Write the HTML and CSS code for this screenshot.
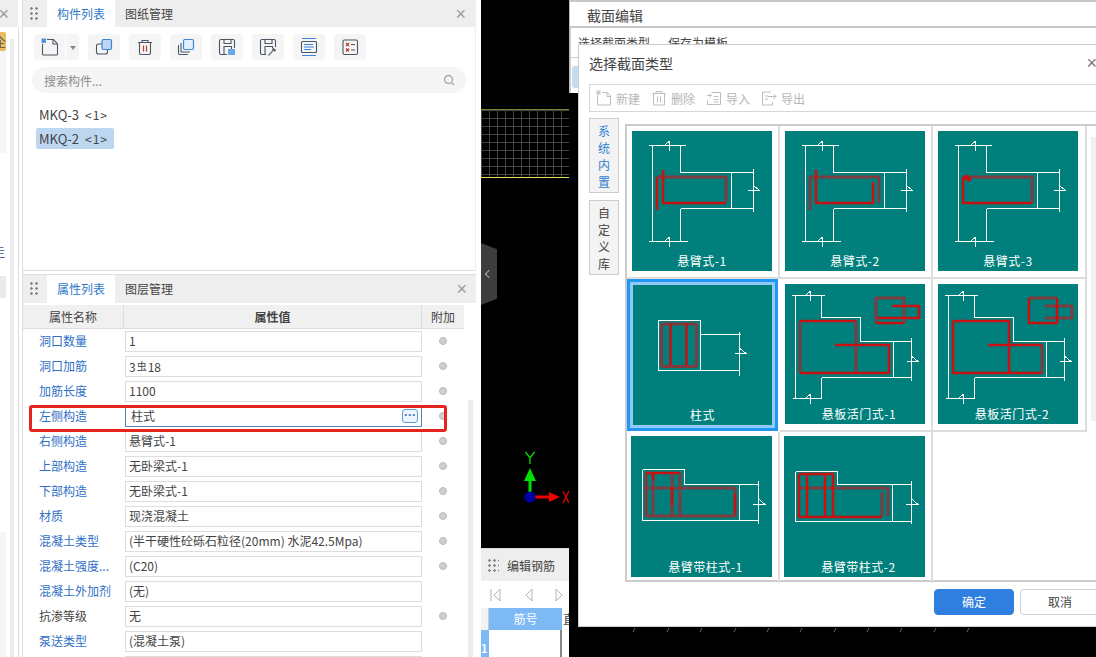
FILE: index.html
```html
<!DOCTYPE html>
<html lang="zh-CN">
<head>
    <meta charset="UTF-8">
    <title>截面编辑</title>
    <link rel="stylesheet" href="styles.css">
</head>
<body>
<div class="app">

    <div class="side-strip">
        <div class="strip-head"><span class="close-x">×</span></div>
        <div class="strip-body">
            <div class="strip-pane">
                <span class="strip-badge">企</span>
                <span class="strip-light"></span>
                <span class="strip-mark">走.</span>
                <span class="strip-box"></span>
                <span class="strip-lower"></span>
            </div>
            <div class="strip-scroll"></div>
        </div>
    </div>

    <div class="panels">
        <section class="panel panel-list">
            <div class="panel-head">
                <span class="grip"></span>
                <span class="tab active">构件列表</span>
                <span class="tab">图纸管理</span>
                <span class="close-x">×</span>
            </div>
            <div class="toolbar">
                <div class="tool-split">
                    <span class="tool-main">
                        <svg viewBox="0 0 20 20" class="icon"><path class="ic-dark" d="M2.500 7V17a1 1 0 0 0 1 1h13a1 1 0 0 0 1-1V7l-4-4.500H7"/><path class="ic-dark" d="M13 3v4h4"/><rect x="1.500" y="1.500" width="4.500" height="4.500" class="ic-check"/></svg>
                    </span>
                    <span class="tool-drop"></span>
                </div>
                <span class="tool">
                    <svg viewBox="0 0 20 20" class="icon"><rect x="2.500" y="7" width="11" height="10" rx="2" class="ic-dark"/><rect x="8" y="2.500" width="9.500" height="10" rx="1.500" class="ic-blue"/></svg>
                </span>
                <span class="tool">
                    <svg viewBox="0 0 20 20" class="icon"><path class="ic-dark" d="M3 5.500h14M7 5.500V3.500h6v2M4.500 5.500V16a1.500 1.500 0 0 0 1.500 1.500h8a1.500 1.500 0 0 0 1.500-1.500V5.500"/><path class="ic-red" d="M8.500 8.500v6M11.500 8.500v6"/></svg>
                </span>
                <span class="tool">
                    <svg viewBox="0 0 20 20" class="icon"><path class="ic-dark" d="M2.500 8v8a1.500 1.500 0 0 0 1.500 1.500h8M5 6v8.500a.500.500 0 0 0 .500.500H14"/><rect x="7.500" y="2.500" width="10" height="10" rx="1.500" class="ic-blue-light"/></svg>
                </span>
                <span class="tool">
                    <svg viewBox="0 0 20 20" class="icon"><path class="ic-dark" d="M10 17.500H4a1.500 1.500 0 0 1-1.500-1.500V4A1.500 1.500 0 0 1 4 2.500h12A1.500 1.500 0 0 1 17.500 4v7M7 17V9.500h7.500V12M7 3v3.500h7V3"/><rect x="11" y="12" width="7" height="6" class="ic-fill-blue"/></svg>
                </span>
                <span class="tool">
                    <svg viewBox="0 0 20 20" class="icon"><path class="ic-dark" d="M8 17.500H4a1.500 1.500 0 0 1-1.500-1.500V4A1.500 1.500 0 0 1 4 2.500h12A1.500 1.500 0 0 1 17.500 4v6M7 17V9.500h7.500V11M7 3v3.500h7V3"/><path class="ic-pen" d="M10.500 18.500l5-5.500"/><path class="ic-pen-tip" d="M14.500 11.500l3 2.500"/></svg>
                </span>
                <span class="tool">
                    <svg viewBox="0 0 20 20" class="icon"><rect x="2.500" y="4.500" width="15" height="11" rx="1" class="ic-dark"/><path class="ic-line-blue" d="M3 1.500h14M3 18.500h14M5 7.500h9M5 10h10M5 12.500h7"/></svg>
                </span>
                <span class="tool">
                    <svg viewBox="0 0 20 20" class="icon"><rect x="3" y="3" width="14.500" height="14.500" rx="1.500" class="ic-dark"/><path class="ic-red" d="M6 6l3 3M9 6l-3 3M6 11.500l3 3M9 11.500l-3 3"/><path class="ic-dark" d="M11 7.500h4M11 13h4"/></svg>
                </span>
            </div>
            <div class="search">
                <span>搜索构件...</span>
                <svg viewBox="0 0 12 12" class="search-icon"><circle cx="5.500" cy="5.500" r="4"/><path d="M8.500 8.500l2.500 2.500"/></svg>
            </div>
            <ul class="comp-list">
                <li class="comp-item">MKQ-3<span class="comp-count">&lt;1&gt;</span></li>
                <li class="comp-item selected">MKQ-2<span class="comp-count">&lt;1&gt;</span></li>
            </ul>
        </section>

        <section class="panel panel-props">
            <div class="panel-head">
                <span class="grip"></span>
                <span class="tab active">属性列表</span>
                <span class="tab">图层管理</span>
                <span class="close-x">×</span>
            </div>
            <div class="prop-table">
                <div class="prop-header">
                    <span class="col-name">属性名称</span>
                    <span class="col-value">属性值</span>
                    <span class="col-extra">附加</span>
                </div>
                <div class="prop-row"><span class="prop-name">洞口数量</span><span class="prop-value">1</span><span class="radio"></span></div>
                <div class="prop-row"><span class="prop-name">洞口加筋</span><span class="prop-value">3<span class="rebar">虫</span>18</span><span class="radio"></span></div>
                <div class="prop-row"><span class="prop-name">加筋长度</span><span class="prop-value">1100</span><span class="radio"></span></div>
                <div class="prop-row"><span class="prop-name">左侧构造</span><span class="prop-value editing">柱式<span class="more-btn">···</span></span><span class="radio"></span></div>
                <div class="prop-row"><span class="prop-name">右侧构造</span><span class="prop-value">悬臂式-1</span><span class="radio"></span></div>
                <div class="prop-row"><span class="prop-name">上部构造</span><span class="prop-value">无卧梁式-1</span><span class="radio"></span></div>
                <div class="prop-row"><span class="prop-name">下部构造</span><span class="prop-value">无卧梁式-1</span><span class="radio"></span></div>
                <div class="prop-row"><span class="prop-name">材质</span><span class="prop-value">现浇混凝土</span><span class="radio"></span></div>
                <div class="prop-row"><span class="prop-name">混凝土类型</span><span class="prop-value">(半干硬性砼砾石粒径(20mm) 水泥42.5Mpa)</span><span class="radio"></span></div>
                <div class="prop-row"><span class="prop-name">混凝土强度...</span><span class="prop-value">(C20)</span><span class="radio"></span></div>
                <div class="prop-row"><span class="prop-name">混凝土外加剂</span><span class="prop-value">(无)</span></div>
                <div class="prop-row"><span class="prop-name plain">抗渗等级</span><span class="prop-value">无</span><span class="radio"></span></div>
                <div class="prop-row"><span class="prop-name">泵送类型</span><span class="prop-value">(混凝土泵)</span></div>
                <div class="prop-row"><span class="prop-name"></span><span class="prop-value"></span></div>
            </div>
            <div class="prop-scroll"></div>
            <div class="highlight-box"></div>
        </section>
    </div>

    <div class="cad-view">
        <div class="cad-grid"></div>
        <div class="cad-handle"><span class="handle-arrow"></span></div>
        <svg class="cad-axis" viewBox="0 0 50 60">
            <path class="axis-y" d="M11 30V44"/>
            <path class="axis-y-head" d="M11 18l-6 13h12z"/>
            <path class="axis-y-label" d="M6.500 2l4.500 6 4.500-6M11 8V14"/>
            <path class="axis-x" d="M14 47h18"/>
            <path class="axis-x-head" d="M41 47l-11-5v10z"/>
            <path class="axis-x-label" d="M44 41l6 12M50 41l-6 12"/>
            <circle cx="11" cy="47" r="5.500" class="axis-origin"/>
        </svg>
        <svg class="cad-ticks" viewBox="0 0 350 6">
            <path d="M3 5l2-4M37 5l2-4M70 5l2-4M104 5l2-4M137 5l2-4M170 5l2-4M204 5l2-4M237 5l2-4M270 5l2-4M304 5l2-4M337 5l2-4"/>
        </svg>
        <div class="rebar-panel">
            <div class="rebar-head">
                <span class="grip"></span>
                <span class="rebar-title">编辑钢筋</span>
            </div>
            <div class="rebar-tools">
                <svg viewBox="0 0 80 14" class="rebar-nav"><path d="M1 1v12M10 1l-6 6 6 6zM42 1l-6 6 6 6zM66 1l6 6-6 6z"/></svg>
            </div>
            <div class="rebar-grid">
                <span class="rebar-corner"></span>
                <span class="rebar-col">筋号</span>
                <span class="rebar-col-next">直</span>
            </div>
            <div class="rebar-rows">
                <span class="rebar-index">1</span>
                <span class="rebar-cell"></span>
            </div>
        </div>
    </div>

    <!-- 后面的窗口 -->
    <div class="window window-back">
        <div class="back-title">截面编辑</div>
        <div class="back-menu"><span>选择截面类型</span><span>保存为模板</span></div>
        <div class="back-tabs"><span class="back-tab"></span></div>
    </div>

    <!-- 选择截面类型 -->
    <div class="window type-dialog">
        <div class="dialog-title">选择截面类型<span class="close-x dialog-close">×</span></div>
        <div class="dialog-tools">
            <span class="dialog-tool">
                <svg viewBox="0 0 16 16" class="tool-icon"><path d="M1.500 5V15h13V6l-3-3.500H6M11 3v3.500h3.500"/><rect x=".5" y=".5" width="4" height="4" class="tool-icon-dots"/></svg>新建
            </span>
            <span class="dialog-tool">
                <svg viewBox="0 0 16 16" class="tool-icon"><path d="M1.500 3.500h13M5 3.500V1.500h6v2M2.500 3.500V15h11V3.500M6.500 6.500v6M9.500 6.500v6"/></svg>删除
            </span>
            <span class="dialog-tool">
                <svg viewBox="0 0 16 16" class="tool-icon"><path d="M5.500 2.500H14.500V14.500H1.500V10M8 6.500h4.500M8 9.500h4.500M8 12h4.500M1 5.500h4M3.500 3.500l2 2-2 2"/></svg>导入
            </span>
            <span class="dialog-tool">
                <svg viewBox="0 0 16 16" class="tool-icon"><path d="M10 2H1.500v13h10v-3M4 6h3M4 9h3M7 6.500h8M12.500 4l2.500 2.500-2.500 2.500"/></svg>导出
            </span>
        </div>
        <div class="dialog-body">
            <div class="side-tabs">
                <span class="side-tab active">系统内置</span>
                <span class="side-tab">自定义库</span>
            </div>
            <div class="type-grid">

                <div class="type-cell">
                    <div class="tile">
                        <svg viewBox="0 0 140 140" class="tile-art">
                            <path class="wall" d="M16.500 14.500h37M20.500 14.500v96M48.500 14.500v27h73M99.500 41.500v36M121.500 38v43M48.500 77.500h73M48.500 77.500v33M16.500 110.500h39"/>
                            <path class="mark" d="M37.500 10v9.500M37.500 10l-5 4.500M37.500 106v9.500M37.500 106l-5 4.500M116 59.500h11.500l-6-5"/>
                            <path class="bar-dim" d="M25 46H94V71"/>
                            <path class="bar" d="M25 79V46M94 72H31V39"/>
                        </svg>
                        <span class="tile-label">悬臂式-1</span>
                    </div>
                </div>

                <div class="type-cell">
                    <div class="tile">
                        <svg viewBox="0 0 140 140" class="tile-art">
                            <path class="wall" d="M16.500 14.500h37M20.500 14.500v96M48.500 14.500v27h73M99.500 41.500v36M121.500 38v43M48.500 77.500h73M48.500 77.500v33M16.500 110.500h39"/>
                            <path class="mark" d="M37.500 10v9.500M37.500 10l-5 4.500M37.500 106v9.500M37.500 106l-5 4.500M116 59.500h11.500l-6-5"/>
                            <path class="bar-dim" d="M25 79V46H94V72"/>
                            <path class="bar" d="M31 39V72H88V51"/>
                        </svg>
                        <span class="tile-label">悬臂式-2</span>
                    </div>
                </div>

                <div class="type-cell">
                    <div class="tile">
                        <svg viewBox="0 0 140 140" class="tile-art">
                            <path class="wall" d="M16.500 14.500h37M20.500 14.500v96M48.500 14.500v27h73M99.500 41.500v36M121.500 38v43M48.500 77.500h73M48.500 77.500v33M16.500 110.500h39"/>
                            <path class="mark" d="M37.500 10v9.500M37.500 10l-5 4.500M37.500 106v9.500M37.500 106l-5 4.500M116 59.500h11.500l-6-5"/>
                            <path class="bar-dim" d="M25 46H94V72"/>
                            <path class="bar" d="M25 46V72H94M25 46l7 4M27 44l6 5"/>
                        </svg>
                        <span class="tile-label">悬臂式-3</span>
                    </div>
                </div>

                <div class="type-cell selected">
                    <div class="tile">
                        <svg viewBox="0 0 140 140" class="tile-art">
                            <path class="wall" d="M26.500 36.500h42v50h-42zM68.500 50.500h40M68.500 86.500h39M107.500 47.500v44"/>
                            <path class="mark" d="M102.500 69.500h11.500l-6-5"/>
                            <rect x="29.500" y="40" width="35" height="42.500" rx="2" class="bar-dim"/>
                            <path class="bar" d="M38.500 40V82M54.500 40V82"/>
                        </svg>
                        <span class="tile-label">柱式</span>
                    </div>
                </div>

                <div class="type-cell">
                    <div class="tile">
                        <svg viewBox="0 0 140 140" class="tile-art">
                            <path class="wall" d="M6.500 11.500h33M10.500 11.500v103M36.500 11.500v22h39v24h51M108.500 57.500v36M126.500 54v43M36.500 93.500h90M36.500 93.500v21M7.500 114.500h29"/>
                            <path class="mark" d="M25.500 7v9.500M25.500 7l-5 4.500M25.500 110v9.500M25.500 110l-5 4.500M121.500 77.500h11.500l-6-5"/>
                            <path class="bar-dim" d="M71 37V89M15 89V37M91 34V14H119V39M91 39V34"/>
                            <path class="bar" d="M15 37H71M50 61H104V89H15M91 39H119M107 22H134V34H92"/>
                        </svg>
                        <span class="tile-label wide">悬板活门式-1</span>
                    </div>
                </div>

                <div class="type-cell">
                    <div class="tile">
                        <svg viewBox="0 0 140 140" class="tile-art">
                            <path class="wall" d="M6.500 11.500h33M10.500 11.500v103M36.500 11.500v22h39v24h51M108.500 57.500v36M126.500 54v43M36.500 93.500h90M36.500 93.500v21M7.500 114.500h29"/>
                            <path class="mark" d="M25.500 7v9.500M25.500 7l-5 4.500M25.500 110v9.500M25.500 110l-5 4.500M121.500 77.500h11.500l-6-5"/>
                            <path class="bar-dim" d="M104 61V89M107 22H134V34H107M91 14H119"/>
                            <path class="bar" d="M15 37H71V89M15 37V89H104M50 61H104M91 14V39H119V14"/>
                        </svg>
                        <span class="tile-label wide">悬板活门式-2</span>
                    </div>
                </div>

                <div class="type-cell">
                    <div class="tile">
                        <svg viewBox="0 0 141 141" class="tile-art">
                            <path class="wall" d="M11.500 33.500h42v15h74M11.500 33.500v51h116M108.500 48.500v36M127.500 45v43"/>
                            <path class="mark" d="M122 68h11.500l-6-5"/>
                            <path class="bar-dim" d="M15 80V37M49 37V80M15 52H104V80H15M22 37V80M41 37V80"/>
                            <path class="bar" d="M15 37H49M22 37V44M41 52V70M104 58V78"/>
                        </svg>
                        <span class="tile-label wide">悬臂带柱式-1</span>
                    </div>
                </div>

                <div class="type-cell">
                    <div class="tile">
                        <svg viewBox="0 0 141 141" class="tile-art">
                            <path class="wall" d="M11.500 35.500h42v13h74M11.500 35.500v50h116M108.500 48.500v37M127.500 45v43"/>
                            <path class="mark" d="M122 68h11.500l-6-5"/>
                            <path class="bar-dim" d="M49 52H104V80M98 80V56M15 52H49"/>
                            <path class="bar" d="M15 38H49V81M15 38V81H98M23 38V81M41 38V81"/>
                        </svg>
                        <span class="tile-label wide">悬臂带柱式-2</span>
                    </div>
                </div>

                <div class="type-cell empty"></div>
            </div>
            <div class="grid-scroll"></div>
        </div>
        <div class="dialog-foot">
            <span class="btn primary">确定</span>
            <span class="btn">取消</span>
        </div>
    </div>
</div>
</body>
</html>
```

FILE: styles.css
```css
* {
    box-sizing: border-box;
}
html, body {
    margin: 0;
    padding: 0;
    background: #fff;
    overflow: hidden;
}
body {
    font-family: "Noto Sans CJK SC", "Open Sans", sans-serif;
    font-size: 12px;
    color: #444;
}
.app {
    position: relative;
    display: flex;
    width: 1096px;
    height: 657px;
    overflow: hidden;
}
.close-x {
    margin-left: auto;
    color: #9a9a9a;
    font-size: 18px;
    line-height: 1;
    font-family: "Liberation Sans", sans-serif;
}

/* left strip */
.side-strip {
    width: 23px;
    flex-shrink: 0;
    border-right: 1px solid #ddd;
    display: flex;
    flex-direction: column;
}
.strip-head {
    height: 27px;
    width: 18px;
    background: #eeeeef;
    display: flex;
    align-items: center;
    justify-content: flex-end;
    padding-right: 9px;
    overflow: hidden;
}
.strip-head .close-x {
    flex-shrink: 0;
}
.strip-body {
    flex: 1;
    display: flex;
    width: 19px;
    border-right: 1px solid #ddd;
}
.strip-pane {
    width: 6px;
    flex-shrink: 0;
    display: flex;
    flex-direction: column;
    padding-top: 5px;
    overflow: hidden;
    color: #555;
}
.strip-badge {
    display: block;
    height: 19px;
    flex-shrink: 0;
    background: #ecb95f;
    border-radius: 0 2px 2px 0;
    color: #555;
    line-height: 19px;
    text-indent: -6px;
    overflow: hidden;
}
.strip-light {
    display: block;
    height: 102px;
    flex-shrink: 0;
    background: #f6f6f8;
}
.strip-mark {
    display: block;
    flex-shrink: 0;
    margin: 91px 0 0 -7px;
    width: 20px;
    line-height: 16px;
    color: #3a5a88;
    white-space: nowrap;
}
.strip-box {
    display: block;
    height: 22px;
    flex-shrink: 0;
    margin-top: 16px;
    background: #eaeaec;
}
.strip-lower {
    display: block;
    flex: 1;
    margin-top: 234px;
    background: #f5f5f6;
}
.strip-scroll {
    width: 4px;
    margin: 12px 0 0 4px;
    background: #ececee;
}

/* panels */
.panels {
    width: 453px;
    flex-shrink: 0;
    display: flex;
    flex-direction: column;
}
.panel {
    position: relative;
}
.panel-list {
    height: 271px;
    border-bottom: 1px solid #ddd;
    border-right: 1px solid #eee;
}
.panel-props {
    margin-top: 3px;
    flex: 1;
    border-top: 1px solid #ddd;
    overflow: hidden;
}
.panel-head {
    display: flex;
    align-items: stretch;
    height: 27px;
    background: #eeeeef;
    padding-right: 9px;
    font-size: 12px;
}
.panel-props .panel-head {
    height: 28px;
}
.panel-head .close-x {
    align-self: center;
}
.grip {
    width: 24px;
    flex-shrink: 0;
    background-image: radial-gradient(circle, #888 1.1px, transparent 1.5px);
    background-size: 5px 5px;
    background-clip: content-box;
    background-origin: content-box;
    padding: 6px 8px 6px 6px;
}
.tab {
    width: 68px;
    text-align: center;
    line-height: 27px;
    color: #444;
}
.tab.active {
    background: #fff;
    color: #2f78c8;
}
.toolbar {
    display: flex;
    gap: 9px;
    padding: 7px 0 0 11px;
}
.tool, .tool-split {
    height: 26px;
    background: #f5f5f5;
    border-radius: 4px;
    display: flex;
    align-items: center;
    justify-content: center;
}
.tool {
    width: 32px;
}
.tool-split {
    width: 45px;
}
.tool-main {
    width: 32px;
    height: 26px;
    border-right: 1px solid #fff;
    display: flex;
    align-items: center;
    justify-content: center;
}
.tool-drop {
    flex: 1;
    position: relative;
    height: 26px;
}
.tool-drop::after {
    content: "";
    position: absolute;
    left: 4px;
    top: 12px;
    border: 3px solid transparent;
    border-top: 4px solid #888;
}
.icon {
    width: 20px;
    height: 20px;
    fill: none;
}
.ic-dark {
    fill: none;
    stroke: #4b5563;
    stroke-width: 1.1;
}
.ic-red {
    fill: none;
    stroke: #c0392b;
    stroke-width: 1.2;
}
.ic-blue {
    fill: #bdd6f6;
    stroke: #3d85d8;
    stroke-width: 1.2;
}
.ic-blue-light {
    fill: #e2eefb;
    stroke: #3d85d8;
    stroke-width: 1.2;
}
.ic-check {
    fill: #4a8ee0;
    stroke: #cfe1f7;
    stroke-width: .6;
    stroke-dasharray: 1 1;
}
.ic-fill-blue {
    fill: #6ba6e8;
}
.ic-pen {
    stroke: #7b8794;
    stroke-width: 1.6;
}
.ic-pen-tip {
    stroke: #4b5563;
    stroke-width: 2;
}
.ic-line-blue {
    fill: none;
    stroke: #3b84d6;
    stroke-width: 1.2;
}
.search {
    display: flex;
    align-items: center;
    justify-content: space-between;
    height: 26px;
    margin: 7px 9px 0 9px;
    padding: 0 11px 0 12px;
    background: #f5f5f5;
    border-radius: 13px;
    color: #8c8c8c;
}
.search-icon {
    width: 12px;
    height: 12px;
    fill: none;
    stroke: #a5a5a5;
    stroke-width: 1.3;
}
.comp-list {
    list-style: none;
    margin: 11px 0 0 13px;
    padding: 0;
    font-size: 13px;
}
.comp-item {
    width: 78px;
    height: 21px;
    margin-bottom: 3px;
    padding-left: 3px;
    line-height: 21px;
    border-radius: 2px;
    white-space: nowrap;
    color: #444;
}
.comp-item.selected {
    background: #bdd7f0;
}
.comp-count {
    margin-left: 6px;
    font-size: 12px;
    letter-spacing: 1px;
}

/* attribute table */
.prop-table {
    margin-top: 2px;
    width: 441px;
}
.prop-header {
    display: flex;
    height: 24px;
    line-height: 23px;
    background: #f0f0f1;
    border-bottom: 1px solid #ddd;
    text-align: center;
    color: #444;
}
.col-name {
    width: 101px;
    border-right: 1px solid #ddd;
}
.col-value {
    width: 298px;
    border-right: 1px solid #ddd;
    font-weight: 700;
}
.col-extra {
    width: 42px;
}
.prop-row {
    display: flex;
    align-items: center;
    height: 25px;
}
.prop-name {
    width: 102px;
    padding: 0 0 2px 16px;
    color: #2f6fc6;
    white-space: nowrap;
}
.prop-name.plain {
    color: #444;
}
.prop-value {
    position: relative;
    width: 297px;
    height: 21px;
    line-height: 17px;
    padding-left: 3px;
    border: 1px solid #ddd;
    color: #444;
    white-space: nowrap;
}
.prop-value.editing {
    padding-left: 5px;
    border-color: #5b85b5;
}
.rebar {
    font-size: 10px;
    vertical-align: 2px;
    margin: 0 1px;
}
.more-btn {
    position: absolute;
    right: 3px;
    top: 2px;
    width: 16px;
    height: 14px;
    line-height: 10px;
    text-align: center;
    border: 1px solid #5a9bdc;
    border-radius: 3px;
    background: #eef5fc;
    color: #3b78bd;
    font-weight: 700;
    font-family: "Liberation Sans", sans-serif;
}
.radio {
    width: 8px;
    height: 8px;
    margin: -1px 0 0 17px;
    border-radius: 50%;
    background: #cfcfcf;
    border: 1px solid #bbb;
}
.prop-scroll {
    position: absolute;
    left: 445px;
    top: 125px;
    width: 5px;
    height: 270px;
    background: #ececee;
}
.highlight-box {
    position: absolute;
    left: 6px;
    top: 130px;
    width: 418px;
    height: 27px;
    border: 3px solid #e5251d;
    border-radius: 3px;
}

/* canvas */
.cad-view {
    position: absolute;
    left: 481px;
    top: 0;
    width: 615px;
    height: 657px;
    background: #000;
    overflow: hidden;
}
.cad-grid {
    position: absolute;
    left: 0;
    top: 109px;
    width: 88px;
    height: 69px;
    border-top: 1px solid #808030;
    border-bottom: 1px solid #e0e060;
    background-image:
        linear-gradient(#45453f 1px, transparent 1px),
        linear-gradient(90deg, #45453f 1px, transparent 1px);
    background-size: 8px 8px;
}
.cad-handle {
    position: absolute;
    left: 0;
    top: 243px;
    width: 16px;
    height: 62px;
    background: #3d3d3d;
    clip-path: polygon(0 0, 100% 10%, 100% 90%, 0 100%);
    display: flex;
    align-items: center;
    justify-content: center;
}
.handle-arrow {
    width: 6px;
    height: 6px;
    border-left: 1px solid #aaa;
    border-bottom: 1px solid #aaa;
    transform: rotate(45deg);
}
.cad-axis {
    position: absolute;
    left: 38px;
    top: 450px;
    width: 50px;
    height: 60px;
}
.cad-ticks {
    position: absolute;
    left: 149px;
    top: 627px;
    width: 350px;
    height: 6px;
    fill: none;
    stroke: #666;
}
.axis-y {
    stroke: #00e000;
    stroke-width: 3;
}
.axis-y-head {
    fill: #00e000;
}
.axis-y-label {
    fill: none;
    stroke: #00e000;
    stroke-width: 1.3;
}
.axis-x {
    stroke: #f00000;
    stroke-width: 3;
}
.axis-x-head {
    fill: #f00000;
}
.axis-x-label {
    fill: none;
    stroke: #f00000;
    stroke-width: 1.3;
}
.axis-origin {
    fill: #0000a8;
}
.rebar-panel {
    position: absolute;
    left: 0;
    top: 548px;
    width: 88px;
    height: 109px;
    background: #fff;
    border-top: 1px solid #ddd;
    overflow: hidden;
}
.rebar-head {
    display: flex;
    align-items: center;
    height: 32px;
    background: #eeeeef;
    white-space: nowrap;
}
.rebar-head .grip {
    height: 32px;
    padding: 9px 8px 9px 6px;
    width: 26px;
}
.rebar-tools {
    height: 27px;
    display: flex;
    align-items: center;
    padding-left: 9px;
}
.rebar-nav {
    width: 80px;
    height: 14px;
    flex-shrink: 0;
    fill: none;
    stroke: #aeb4bb;
}
.rebar-grid {
    display: flex;
    height: 22px;
    line-height: 22px;
    white-space: nowrap;
}
.rebar-corner {
    width: 8px;
    flex-shrink: 0;
    background: #f2f2f2;
    border-right: 1px solid #ccc;
}
.rebar-col {
    width: 73px;
    flex-shrink: 0;
    background: #7cb9f5;
    color: #fff;
    text-align: center;
}
.rebar-col-next {
    padding-left: 1px;
    color: #444;
}
.rebar-rows {
    display: flex;
    height: 27px;
}
.rebar-index {
    width: 8px;
    flex-shrink: 0;
    background: #7cb9f5;
    color: #fff;
    font-size: 11px;
    font-weight: 700;
    line-height: 36px;
    overflow: hidden;
}
.rebar-cell {
    width: 73px;
    flex-shrink: 0;
    border-right: 2px solid #888;
}

/* windows */
.window {
    position: absolute;
    background: #fff;
}
.window-back {
    left: 569px;
    top: 0;
    width: 527px;
    height: 93px;
    border-top: 2px solid #c8c8cc;
    border-left: 1px solid #bbb;
}
.back-title {
    height: 26px;
    padding-left: 17px;
    line-height: 26px;
    font-size: 14px;
    color: #444;
    border-bottom: 2px solid #c8c8cc;
}
.back-menu {
    display: flex;
    gap: 18px;
    height: 30px;
    padding: 6px 0 0 7px;
    line-height: 18px;
    border-left: 1px solid #ccc;
    border-bottom: 1px solid #ccc;
    color: #444;
}
.back-tabs {
    height: 35px;
    border-left: 1px solid #ccc;
    padding: 8px 0 0 1px;
}
.back-tab {
    display: block;
    width: 8px;
    height: 22px;
    background: #c6daf0;
    border-radius: 3px 0 0 3px;
}
.type-dialog {
    left: 578px;
    top: 44px;
    width: 518px;
    height: 583px;
    border: 1px solid #ccc;
    border-right: none;
}
.dialog-title {
    position: relative;
    height: 39px;
    padding-left: 10px;
    line-height: 37px;
    font-size: 14px;
    color: #444;
}
.dialog-close {
    position: absolute;
    right: -1px;
    top: 9px;
    color: #777;
}
.dialog-tools {
    display: flex;
    gap: 11px;
    height: 28px;
    margin-left: 10px;
    padding-left: 6px;
    border: 1px solid #d6d6d6;
    border-right: none;
    align-items: center;
    color: #b5b5b5;
}
.dialog-tool {
    display: flex;
    align-items: center;
    gap: 4px;
}
.tool-icon {
    width: 16px;
    height: 16px;
    fill: none;
    stroke: #bdbdbd;
}
.tool-icon-dots {
    fill: #ccc;
    stroke: none;
}
.dialog-body {
    position: relative;
    display: flex;
    margin: 6px 0 0 10px;
    gap: 6px;
}
.side-tabs {
    display: flex;
    flex-direction: column;
    gap: 7px;
    width: 30px;
    flex-shrink: 0;
}
.side-tab {
    display: flex;
    align-items: center;
    justify-content: center;
    width: 30px;
    height: 75px;
    padding: 0 8px;
    line-height: 17px;
    text-align: center;
    color: #444;
    background: #f3f3f3;
    border: 1px solid #ccc;
}
.side-tab.active {
    color: #2f7fd0;
}
.type-grid {
    display: grid;
    grid-template-columns: 153px 153px 154px;
    grid-template-rows: 153px 153px 151px;
    width: 471px;
    height: 458px;
    margin-top: 6px;
    border: 2px solid #ccc;
    border-right: none;
    padding-right: 11px;
}
.type-cell {
    border-right: 2px solid #ddd;
    border-bottom: 2px solid #ddd;
    padding: 5px 0 0 5px;
}
.type-cell:nth-child(n+7) {
    border-bottom: none;
    padding: 4px 0 0 4px;
}
.type-cell:nth-child(n+7) .tile,
.type-cell:nth-child(n+7) .tile-art {
    width: 141px;
    height: 141px;
}
.type-cell.empty {
    border: none;
}
.type-cell.selected {
    padding: 0;
    border: 3px solid #2196f3;
    margin: 0 2px 1px 0;
    background: #fff;
}
.type-cell.selected .tile {
    width: 100%;
    height: 100%;
    border: 3px solid #90caf9;
}
.type-cell.selected .tile-art {
    left: -1px;
    top: -1px;
}
.tile {
    position: relative;
    width: 140px;
    height: 140px;
    background: #007f7d;
    color: #fff;
    display: flex;
    flex-direction: column;
    justify-content: flex-end;
    align-items: center;
    padding-bottom: 2px;
    overflow: hidden;
}
.tile-art {
    position: absolute;
    left: 0;
    top: 0;
    width: 140px;
    height: 140px;
    fill: none;
}
.tile-label {
    position: relative;
    line-height: 16px;
    letter-spacing: .5px;
    white-space: nowrap;
}
.tile-label.wide {
    padding-left: 8px;
}
.wall {
    fill: none;
    stroke: #fff;
    stroke-width: 1;
    shape-rendering: crispEdges;
}
.mark {
    fill: none;
    stroke: #fff;
    stroke-width: 1;
    shape-rendering: crispEdges;
}
.bar {
    fill: none;
    stroke: #c81212;
    stroke-width: 2.5;
    stroke-linejoin: round;
}
.bar-dim {
    fill: none;
    stroke: #7e3c3e;
    stroke-width: 3;
    stroke-linejoin: round;
}
.grid-scroll {
    position: absolute;
    right: 0;
    top: 19px;
    width: 5px;
    height: 284px;
    background: #f0f0f1;
}
.dialog-foot {
    display: flex;
    justify-content: flex-start;
    gap: 6px;
    padding: 7px 0 0 355px;
}
.btn {
    flex-shrink: 0;
    width: 80px;
    height: 26px;
    line-height: 24px;
    text-align: center;
    border: 1px solid #d0d0d0;
    border-radius: 4px;
    color: #444;
}
.btn.primary {
    background: #2f7fe0;
    border-color: #2f7fe0;
    color: #fff;
}
```
